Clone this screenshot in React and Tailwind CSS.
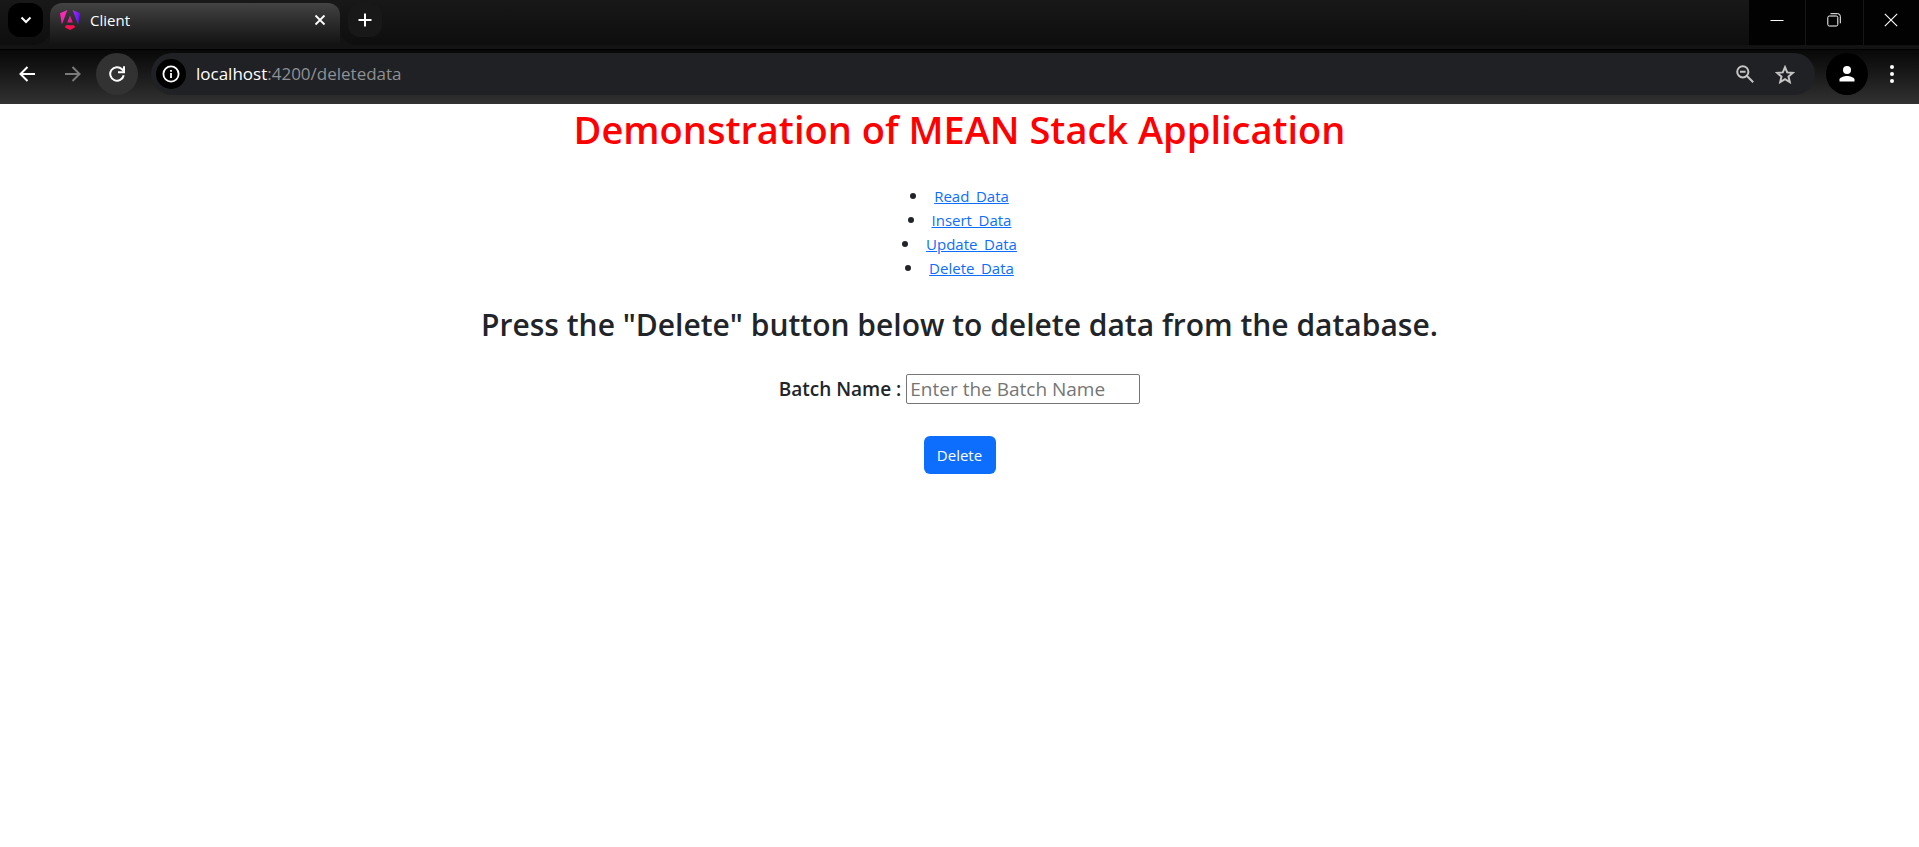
import React from "react";

const links = ["Read_Data", "Insert_Data", "Update_Data", "Delete_Data"];

function AngularLogo() {
  return (
    <svg viewBox="0 0 20 20" className="size-5 shrink-0" aria-hidden="true">
      <defs>
        <linearGradient id="ng-left" x1="0" y1="0" x2="0.3" y2="1">
          <stop offset="0" stopColor="#ff2fb8" />
          <stop offset="1" stopColor="#f01fb0" />
        </linearGradient>
        <linearGradient id="ng-right" x1="0" y1="0" x2="1" y2="0.4">
          <stop offset="0" stopColor="#b02bf5" />
          <stop offset="1" stopColor="#5f14ff" />
        </linearGradient>
        <linearGradient id="ng-mid" x1="0" y1="0" x2="0" y2="1">
          <stop offset="0" stopColor="#d420b8" />
          <stop offset="1" stopColor="#f0188c" />
        </linearGradient>
      </defs>
      <path d="M0 3.2 7.4 0 1.9 14.4Z" fill="url(#ng-left)" />
      <path d="M20 3.2 12.6 0l5.5 14.4Z" fill="url(#ng-right)" />
      <path d="M10 5.4 7.2 12.4h5.6Z" fill="url(#ng-mid)" />
      <path d="M6 15.2h8l1.2 2L10 20l-5.2-2.8Z" fill="#ff1050" />
    </svg>
  );
}

function TabStrip() {
  return (
    <div className="flex h-[49px] items-start bg-[#131313]">
      <div className="flex h-[45px] items-start rounded-br-2xl bg-gradient-to-b from-[#181818] to-[#0e0e0e] pt-[3px] pr-[7px] pl-2">
        <button
          aria-label="Search tabs"
          className="flex h-[34px] w-[35px] items-center justify-center rounded-xl bg-black text-white"
        >
          <svg viewBox="0 0 12 8" className="h-2 w-3" fill="none" stroke="currentColor" strokeWidth="2">
            <path d="m1.5 1.5 4.5 4.5 4.5-4.5" />
          </svg>
        </button>
      </div>
      <div className="flex h-[45px] w-[290px] bg-[#181818] pt-[3px]">
        <div className="flex h-[42px] w-full items-start rounded-t-xl bg-gradient-to-b from-[#434343] to-[#131313] pr-[14px] pl-[10px] text-white">
          <div className="flex h-[34px] grow items-center">
            <AngularLogo />
            <span className="ml-[10px] grow text-[15px]">Client</span>
            <button aria-label="Close tab">
              <svg viewBox="0 0 12 12" className="size-3" fill="none" stroke="currentColor" strokeWidth="1.8">
                <path d="m1.5 1.5 9 9m0-9-9 9" />
              </svg>
            </button>
          </div>
        </div>
      </div>
      <div className="flex h-[45px] grow items-start rounded-bl-2xl bg-gradient-to-b from-[#181818] to-[#0e0e0e] pl-2">
        <button
          aria-label="New tab"
          className="mt-[3px] flex size-[34px] items-center justify-center rounded-xl bg-[#181818] text-white"
        >
          <svg viewBox="0 0 14 14" className="size-[14px]" stroke="currentColor" strokeWidth="2">
            <path d="M7 .5v13M.5 7h13" />
          </svg>
        </button>
        <div className="ml-auto flex h-[45px] gap-px bg-[#161616] text-white">
          <button aria-label="Minimize" className="flex w-14 items-center justify-center bg-[#020202] pb-[6px]">
            <svg viewBox="0 0 14 14" className="size-[14px]" stroke="currentColor">
              <path d="M.5 7.5h13" />
            </svg>
          </button>
          <button aria-label="Restore" className="flex w-[57px] items-center justify-center bg-[#020202] pr-[2px] pb-[6px]">
            <svg viewBox="0 0 14 14" className="size-[14px]" fill="none" stroke="currentColor">
              <rect x=".8" y="3" width="10" height="10" rx="1.5" />
              <path d="M3.5.7h7.2a2.6 2.6 0 0 1 2.6 2.6v7" />
            </svg>
          </button>
          <button aria-label="Close" className="flex w-[55px] items-center justify-center bg-[#020202] pr-[2px] pb-[6px]">
            <svg viewBox="0 0 14 14" className="size-[14px]" stroke="currentColor" strokeWidth="1.1">
              <path d="m.8.8 12.4 12.4m0-12.4L.8 13.2" />
            </svg>
          </button>
        </div>
      </div>
    </div>
  );
}

function Toolbar() {
  return (
    <div className="border-t border-black bg-gradient-to-b from-[#080808] to-[#323232] pt-[3px] pb-[9px]">
      <div className="flex items-center">
        <button aria-label="Back" className="ml-[18px] text-white">
          <svg viewBox="0 0 18 18" className="size-[18px]" fill="none" stroke="currentColor" strokeWidth="2">
            <path d="M17 9H3M9.5 2 2.5 9l7 7" />
          </svg>
        </button>
        <button aria-label="Forward" className="ml-[28px] text-[#7a7a7a]">
          <svg viewBox="0 0 18 18" className="size-[18px]" fill="none" stroke="currentColor" strokeWidth="2">
            <path d="M1 9h14M8.5 2l7 7-7 7" />
          </svg>
        </button>
        <button
          aria-label="Reload"
          className="ml-[14px] flex size-[42px] items-center justify-center rounded-full bg-[#323232] text-white"
        >
          <svg viewBox="0 0 16 16" className="size-4" fill="none" stroke="currentColor" strokeWidth="2">
            <path d="M14.7 9.3A6.8 6.8 0 1 1 13 3.3l1.5 1.6" />
            <path d="M15 .2v6H9" />
          </svg>
        </button>
        <div className="ml-[13px] flex h-[42px] grow items-center rounded-full bg-[#202124] pr-5 pl-[5px]">
          <button
            aria-label="View site information"
            className="flex size-[30px] items-center justify-center rounded-full bg-black text-white"
          >
            <svg viewBox="0 0 18 18" className="size-[18px]" fill="none" stroke="currentColor" strokeWidth="1.8">
              <circle cx="9" cy="9" r="7.6" />
              <path d="M9 8v5M9 5v1.8" />
            </svg>
          </button>
          <div className="ml-[10px] grow text-[17px] text-[#8e9094]">
            <span className="text-white">localhost</span>:4200/deletedata
          </div>
          <button aria-label="Zoom" className="text-[#c4c4c4]">
            <svg viewBox="0 0 18 18" className="size-[18px]" fill="none" stroke="currentColor" strokeWidth="2">
              <circle cx="6.8" cy="6.8" r="5.6" />
              <path d="m11 11 6.2 6.2M4 6.8h5.6" />
            </svg>
          </button>
          <button aria-label="Bookmark this tab" className="ml-[21px] text-[#c4c4c4]">
            <svg viewBox="0 0 20 19" className="h-[19px] w-5" fill="none" stroke="currentColor" strokeWidth="2">
              <path d="m10 2.2 2.2 5.2 5.6.5-4.3 3.7 1.3 5.5-4.8-2.9-4.8 2.9 1.3-5.5-4.3-3.7 5.6-.5Z" />
            </svg>
          </button>
        </div>
        <button
          aria-label="Profile"
          className="ml-[11px] flex size-[42px] items-center justify-center rounded-full bg-black text-white"
        >
          <svg viewBox="0 0 16 16" className="size-4" fill="currentColor">
            <circle cx="8" cy="4" r="4" />
            <path d="M.5 15.5v-2c0-2.4 5-3.6 7.5-3.6s7.5 1.2 7.5 3.6v2Z" />
          </svg>
        </button>
        <button aria-label="Menu" className="mr-[25px] ml-[22px] text-white">
          <svg viewBox="0 0 4 18" className="h-[18px] w-1" fill="currentColor">
            <circle cx="2" cy="2" r="2" />
            <circle cx="2" cy="9" r="2" />
            <circle cx="2" cy="16" r="2" />
          </svg>
        </button>
      </div>
    </div>
  );
}

export default function App() {
  return (
    <div className="min-h-screen bg-white font-['Open_Sans','Noto_Sans',sans-serif] text-[#212529]">
      <header>
        <TabStrip />
        <Toolbar />
      </header>
      <main className="flex flex-col items-center pt-px text-center">
        <h1 className="text-[38px] leading-[48px] font-semibold text-[#ff0000]">Demonstration of MEAN Stack Application</h1>
        <ul className="mt-[31px] flex flex-col items-center">
          {links.map((name) => (
            <li key={name} className="flex items-center gap-[18px] text-[15px] leading-6">
              <span className="size-[6px] rounded-full bg-[#212529]" />
              <a href="#" className="text-[#0d6efd] underline">
                {name}
              </a>
            </li>
          ))}
        </ul>
        <h2 className="mt-[26px] text-[30px] leading-[38px] font-semibold">
          Press the "Delete" button below to delete data from the database.
        </h2>
        <form className="mt-[30px] flex flex-col items-center" onSubmit={(e) => e.preventDefault()}>
          <div className="flex items-center gap-[5px]">
            <label htmlFor="batch" className="text-[19px] font-semibold">
              Batch Name :
            </label>
            <input
              id="batch"
              placeholder="Enter the Batch Name"
              className="h-[30px] w-[234px] rounded-[2px] border border-[#767676] px-[3px] text-[19px] placeholder:text-[#757575]"
            />
          </div>
          <button className="mt-8 h-[38px] w-[72px] rounded-md bg-[#0d6efd] text-[15px] text-white">Delete</button>
        </form>
      </main>
    </div>
  );
}
